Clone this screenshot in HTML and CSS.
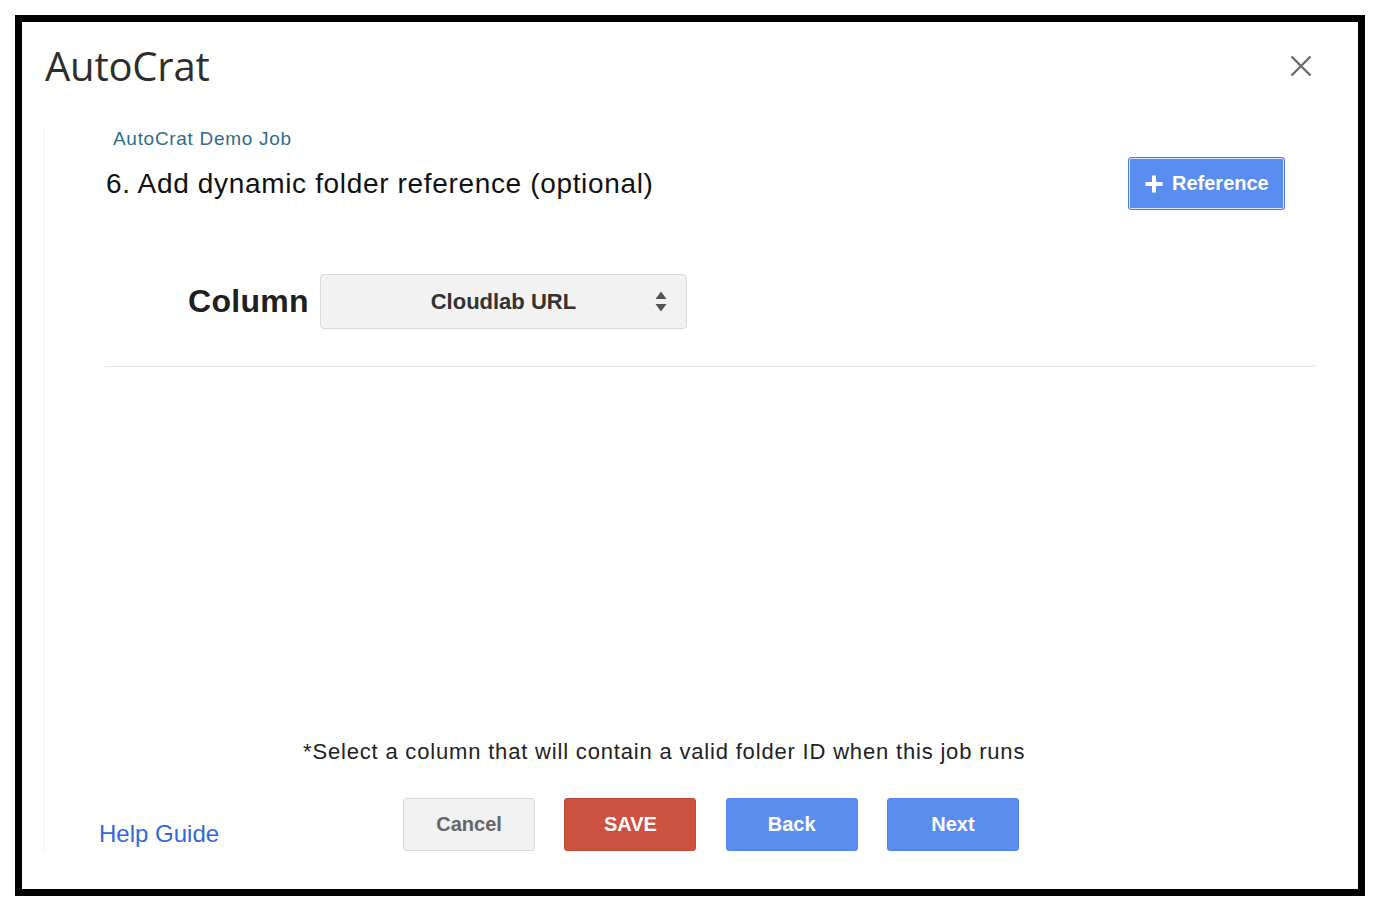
FILE: index.html
```html
<!DOCTYPE html>
<html lang="en">
<head>
<meta charset="utf-8">
<title>AutoCrat</title>
<link rel="stylesheet" href="styles.css">
</head>
<body>
<div class="frame">
  <header class="top">
    <h1 class="title">AutoCrat</h1>
    <button class="close" aria-label="Close">
      <svg width="22" height="22" viewBox="0 0 22 22"><path d="M1.5 1.5 L20.5 20.5 M20.5 1.5 L1.5 20.5" stroke="#6b6b6b" stroke-width="2.4" fill="none"/></svg>
    </button>
  </header>
  <main class="body">
    <div class="job">AutoCrat Demo Job</div>
    <div class="head-row">
      <h2 class="step">6. Add dynamic folder reference (optional)</h2>
      <button class="ref">
        <svg width="18" height="18" viewBox="0 0 18 18"><path d="M9 0.5 V17.5 M0.5 9 H17.5" stroke="#fff" stroke-width="4" fill="none"/></svg>
        <span>Reference</span>
      </button>
    </div>
    <div class="col-row">
      <label class="col-label">Column</label>
      <div class="select">
        <span class="sel-text">Cloudlab URL</span>
        <svg class="arrows" width="12" height="21" viewBox="0 0 12 21"><path d="M6 0.5 L11.5 8 H0.5 Z M0.5 13 H11.5 L6 20.5 Z" fill="#555"/></svg>
      </div>
    </div>
    <hr class="rule">
    <div class="spacer"></div>
    <p class="note">*Select a column that will contain a valid folder ID when this job runs</p>
    <div class="footer">
      <a class="help" href="#">Help Guide</a>
      <div class="btns">
        <button class="btn cancel">Cancel</button>
        <button class="btn save">SAVE</button>
        <button class="btn blue">Back</button>
        <button class="btn blue">Next</button>
      </div>
    </div>
  </main>
</div>
</body>
</html>
```
FILE: styles.css
```css
* { box-sizing: border-box; }
html, body { margin: 0; padding: 0; background: #fff; }
body { font-family: "Liberation Sans", Arial, sans-serif; color: #222; }

.frame {
  margin: 15px;
  width: 1350px;
  height: 881px;
  border: 7px solid #000;
  display: flex;
  flex-direction: column;
  padding-bottom: 38px;
}

.top {
  display: flex;
  align-items: center;
  justify-content: space-between;
  padding: 20px 46px 0 23px;
}
.title {
  margin: 0;
  font-family: "Open Sans", sans-serif;
  font-weight: 400;
  font-size: 40px;
  line-height: 48px;
  color: #2e2e2e;
  letter-spacing: -0.2px;
}
.close {
  border: 0;
  background: none;
  padding: 0;
  width: 22px;
  height: 22px;
  display: flex;
}

.body {
  flex: 1;
  margin: 38px 42px 0 22px;
  border-left: 1px solid #f4f4f4;
  display: flex;
  flex-direction: column;
}

.job {
  margin-left: 68px;
  font-size: 19px;
  line-height: 22px;
  letter-spacing: 0.7px;
  color: #2f6c8c;
}

.head-row {
  margin-top: 5px;
  margin-left: 61px;
  display: flex;
  align-items: center;
  justify-content: space-between;
}
.step {
  margin: 2px 0 0;
  font-weight: 400;
  font-size: 28px;
  line-height: 32px;
  letter-spacing: 0.66px;
  color: #111;
}
.ref {
  margin-right: 31px;
  width: 157px;
  height: 53px;
  display: flex;
  align-items: center;
  gap: 9px;
  padding: 0 0 0 16px;
  background: #5a8df0;
  border: 1px solid #4a7fe9;
  box-shadow: inset 0 0 0 1px #d7e4fd;
  border-radius: 3px;
  color: #fff;
  font-family: "Liberation Sans", Arial, sans-serif;
  font-weight: 700;
  font-size: 20px;
  margin-top: 2px;
}

.col-row {
  margin-top: 64px;
  margin-left: 143px;
  display: flex;
  align-items: center;
  gap: 11px;
}
.col-label {
  font-weight: 700;
  font-size: 32px;
  line-height: 36px;
  letter-spacing: 0.3px;
  color: #202020;
  margin-top: -2px;
}
.select {
  width: 367px;
  height: 55px;
  background: #f2f2f2;
  border: 1px solid #dadada;
  border-radius: 4px;
  display: flex;
  align-items: center;
  justify-content: center;
  position: relative;
}
.sel-text {
  font-weight: 700;
  font-size: 22px;
  color: #333;
}
.arrows {
  position: absolute;
  right: 19px;
  top: 16px;
}

.rule {
  margin: 37px 0 0 61px;
  border: 0;
  border-top: 1px solid #e6e6e6;
  height: 0;
}

.spacer { flex: 1; }

.note {
  margin: 0;
  padding-left: 258px;
  font-size: 22px;
  line-height: 26px;
  letter-spacing: 0.82px;
  color: #222;
}

.footer {
  margin-top: 33px;
  display: flex;
  align-items: flex-end;
}
.help {
  margin-left: 54px;
  margin-bottom: 3px;
  font-size: 24px;
  line-height: 28px;
  color: #3468d9;
  text-decoration: none;
}
.btns {
  margin-left: 184px;
  display: flex;
  gap: 29.3px;
}
.btn {
  width: 132px;
  height: 53px;
  border-radius: 3px;
  font-family: "Liberation Sans", Arial, sans-serif;
  font-weight: 700;
  font-size: 20px;
  color: #fff;
  padding: 0;
}
.cancel {
  background: #f1f1f1;
  border: 1px solid #d8d8d8;
  color: #666;
}
.save {
  background: #cb5241;
  border: 1px solid #c24a3a;
}
.blue {
  background: #5b8def;
  border: 1px solid #4f84ec;
}
```
